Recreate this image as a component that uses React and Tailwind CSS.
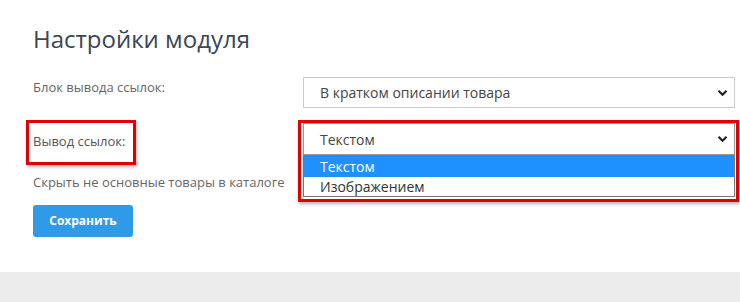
import React from 'react';

function Chevron() {
  return (
    <svg width="11" height="8" viewBox="0 0 11 8" className="absolute right-[6px] top-1/2 -translate-y-1/2">
      <path d="M1.5 1.8 L5.5 5.8 L9.5 1.8" fill="none" stroke="#222" strokeWidth="2.2" />
    </svg>
  );
}

function App() {
  return (
    <div className="w-[740px] h-[302px] bg-white flex flex-col font-['Open_Sans',sans-serif] overflow-hidden">
      <div className="flex-1 pl-[33px] pt-[22px]">
        <h1 className="text-[24px] leading-[34px] text-[#3b4654] font-normal">Настройки модуля</h1>

        <div className="flex items-start mt-[21px]">
          <div className="w-[270px] shrink-0 text-[13px] text-[#666] pt-[1px]">Блок вывода ссылок:</div>
          <div className="relative w-[432px] shrink-0 h-[31px] border border-[#ccc] bg-white flex items-center pl-[16px] text-[14px] text-[#444]">
            В кратком описании товара
            <Chevron />
          </div>
        </div>

        <div className="flex items-start mt-[15px]">
          <div className="w-[270px] shrink-0 text-[13px] text-[#555]">
            <div className="relative inline-block pt-[9px] pb-[11px]">
              Вывод ссылок:
              <div className="absolute -left-[7px] -right-[11px] top-[-3px] bottom-[-2px] border-[3px] border-[#e00000] shadow-[1px_2px_3px_rgba(0,0,0,0.3)]" />
            </div>
          </div>
          <div className="relative w-[432px] shrink-0">
            <div className="relative h-[32px] border border-[#999] bg-white flex items-center pl-[16px] text-[14px] text-[#444]">
              Текстом
              <Chevron />
            </div>
            <div className="absolute left-0 right-0 top-[32px] border border-[#777] bg-white text-[14px] z-10">
              <div className="bg-[#1e90ff] text-white h-[21px] leading-[21px] pl-[16px]">Текстом</div>
              <div className="text-[#333] h-[19px] leading-[19px] pl-[16px]">Изображением</div>
            </div>
            <div className="absolute left-[-5px] right-[-4px] top-[-3px] h-[82px] border-[3px] border-[#e00000] shadow-[1px_2px_3px_rgba(0,0,0,0.3)] z-20 pointer-events-none" />
          </div>
        </div>

        <div className="text-[13px] text-[#666] mt-[10px]">Скрыть не основные товары в каталоге</div>

        <button className="mt-[13px] w-[100px] h-[32px] rounded-[3px] bg-[#2f9be8] text-white text-[12px] font-bold">
          Сохранить
        </button>
      </div>
      <div className="h-[30px] bg-[#ececec]" />
    </div>
  );
}

export default App;
